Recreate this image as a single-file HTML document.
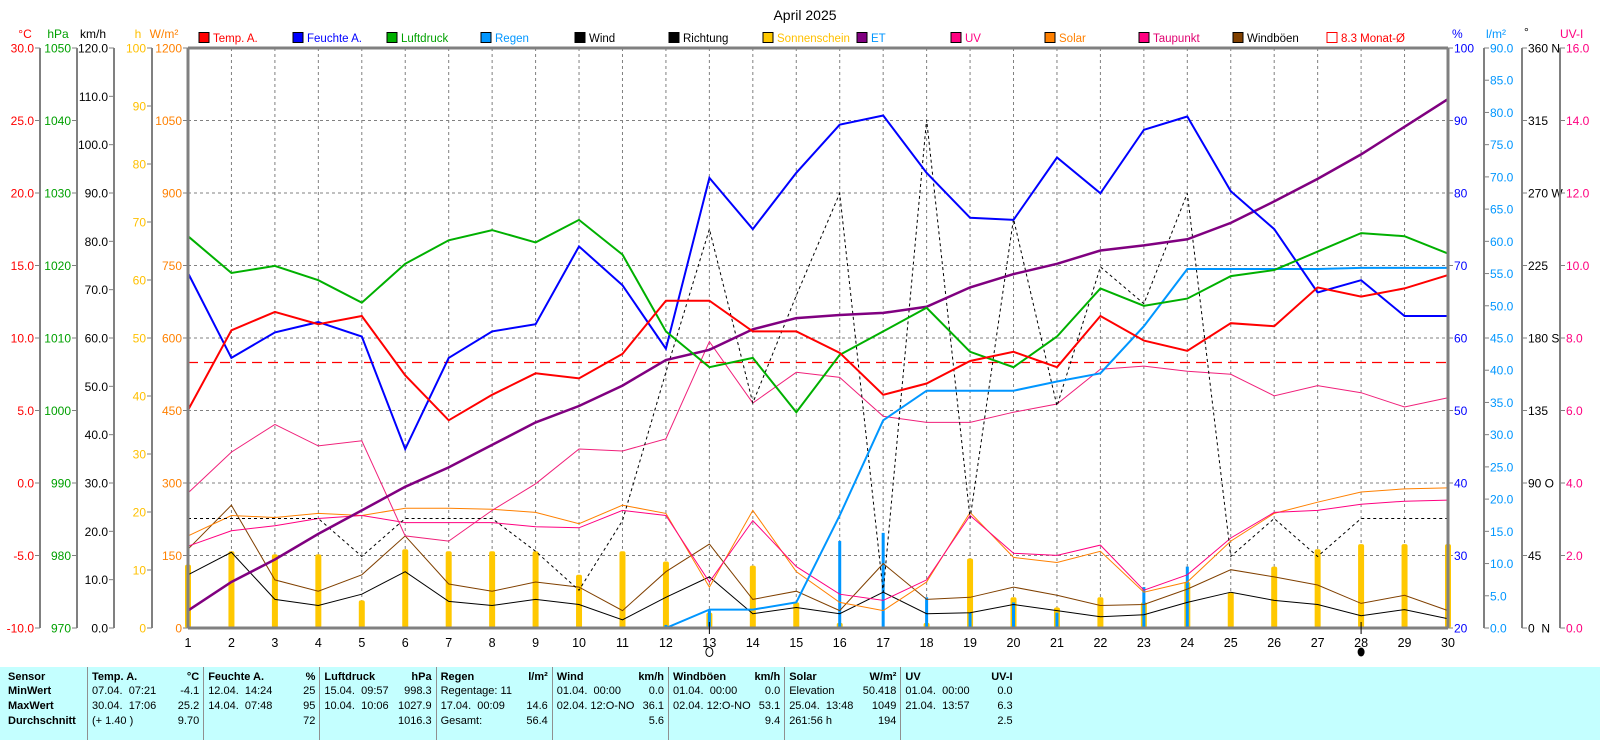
<!DOCTYPE html>
<html><head><meta charset="utf-8">
<style>
html,body{margin:0;padding:0;background:#fff;width:1600px;height:740px;overflow:hidden;font-family:"Liberation Sans",sans-serif}
svg{position:absolute;left:0;top:0}
text{font-family:"Liberation Sans",sans-serif}
#tbl{position:absolute;left:0;top:667px;width:1600px;height:73px;background:#c4ffff;font-size:11px}
#tbl div{position:absolute;white-space:nowrap}
.b{font-weight:bold}
.sep{width:1px;background:#909090;top:0;height:73px}
</style></head><body>
<svg id="s" width="1600" height="667" xmlns="http://www.w3.org/2000/svg"></svg>
<div id="tbl"></div>
<script>
var s=document.getElementById('s'),h='';
function X(d){return 188+(d-1)*43.448;}
function Y(p){return 48+(p-48)*580/567;}
var T=48,B=628;
function line(x1,y1,x2,y2,c,w,da){h+='<line x1="'+x1+'" y1="'+y1+'" x2="'+x2+'" y2="'+y2+'" stroke="'+c+'" stroke-width="'+(w||1)+'"'+(da?' stroke-dasharray="'+da+'"':'')+'/>';}
function txt(x,y,t,c,a,sz){h+='<text x="'+x+'" y="'+y+'" fill="'+c+'" font-size="'+(sz||12)+'"'+(a?' text-anchor="'+a+'"':'')+'>'+t+'</text>';}
for(var i=1;i<8;i++){var y=T+i*72.5;line(188,y,1448,y,'#808080',1,'3,3');}
for(var d=2;d<30;d++)line(X(d),T,X(d),B,'#808080',1,'3,3');
line(188,362.5,1448,362.5,'#ff0000',1.3,'10,6');
txt(805,20,'April 2025','#000','middle',14);
var lg=[['Temp. A.','#ff0000','#ff0000'],['Feuchte A.','#0000ff','#0000ff'],['Luftdruck','#00b000','#00a000'],['Regen','#0096ff','#0096ff'],['Wind','#000','#000'],['Richtung','#000','#000'],['Sonnenschein','#ffc800','#ffc000'],['ET','#800080','#0096ff'],['UV','#ff0080','#ff0080'],['Solar','#ff8000','#ff8000'],['Taupunkt','#ff0080','#e00070'],['Windböen','#804000','#000']];
for(var i=0;i<lg.length;i++){var x=199+i*94;h+='<rect x="'+x+'" y="32.5" width="10" height="10" fill="'+lg[i][1]+'" stroke="#000"/>';txt(x+14,42,lg[i][0],lg[i][2],'',11.5);}
h+='<rect x="1327" y="32.5" width="10" height="10" fill="#fff" stroke="#ff0000"/>';txt(1341,42,'8.3 Monat-Ø','#ff0000','',11.5);
txt(25,38,'°C','#ff0000','middle');txt(58,38,'hPa','#00a000','middle');txt(93,38,'km/h','#000','middle');
txt(138,38,'h','#ffc000','middle');txt(164,38,'W/m²','#ff8000','middle');
txt(1452,38,'%','#0000ff');txt(1486,38,'l/m²','#0096ff');txt(1524,36,'°','#000');txt(1560,38,'UV-I','#ff0080');
var ax=[[40,'#ff0000',8,function(i){return (30-5*i).toFixed(1)}],[77,'#00a000',8,function(i){return 1050-10*i}],[114,'#000',12,function(i){return (120-10*i).toFixed(1)}],[152,'#ffc000',10,function(i){return 100-10*i}],[188,'#ff8000',8,function(i){return 1200-150*i}]];
ax.forEach(function(a){line(a[0],T,a[0],B,'#808080',2);for(var i=0;i<=a[2];i++){var y=T+i*580/a[2];line(a[0]-5,y,a[0],y,'#808080',1);txt(a[0]-6,y+4.5,a[3](i),a[1],'end',12);}});
var rx=[[1448,'#0000ff',8,function(i){return 100-10*i},0],[1484,'#0096ff',18,function(i){return (90-5*i).toFixed(1)},1],[1522,'#000',8,function(i){return [ '360 N','315','270 W','225','180 S','135','90 O','45','0 &#160;N'][i]},1],[1560,'#ff0080',8,function(i){return (16-2*i).toFixed(1)},1]];
rx.forEach(function(a){if(a[4])line(a[0],T,a[0],B,'#808080',2);for(var i=0;i<=a[2];i++){var y=T+i*580/a[2];line(a[0],y,a[0]+5,y,'#808080',1);txt(a[0]+6,y+4.5,a[3](i),a[1],'',12);}});
var sun=[553,540,543,543,588,538,540,540,540,563,540,550,600,554,590,610,615,610,547,585,595,585,590,570,580,555,538,533,533,533];
sun.forEach(function(p,i){if(p<614){var y=Y(p);h+='<rect x="'+(X(i+1)-3)+'" y="'+y+'" width="6" height="'+(B-y)+'" rx="2" fill="#ffc800"/>';}});
var rb={13:598,16:530,17:522,18:585,19:600,20:590,21:600,23:575,24:555,12:612};
for(var k in rb){var y=Y(rb[k]);h+='<rect x="'+(X(+k)-1.5)+'" y="'+y+'" width="3" height="'+(B-y)+'" fill="#0096ff"/>';}
function pl(a,c,w,da){var p=a.map(function(v,i){return X(i+1).toFixed(1)+','+Y(v).toFixed(1)}).join(' ');h+='<polyline points="'+p+'" fill="none" stroke="'+c+'" stroke-width="'+w+'"'+(da?' stroke-dasharray="'+da+'"':'')+'/>';}
pl([538,495,568,579,563,525,572,579,570,575,598,560,533,587,579,598,552,587,585,575,583,593,592,577,558,565,573,591,583,598],'#804000',1);
pl([563,541,587,593,582,560,589,593,587,592,607,585,565,601,595,601,580,601,600,592,598,604,602,590,580,588,592,603,597,606],'#000',1);
pl([525,505,507,503,505,498,498,499,502,513,495,503,575,500,560,590,598,570,502,546,551,540,580,570,530,503,492,482,479,478],'#ff8000',1);
pl([535,520,515,508,505,512,512,512,516,517,500,505,570,510,555,582,588,568,505,542,544,534,578,563,527,502,500,494,491,490],'#ff0080',1);
pl([483,443,416,437,432,525,530,500,474,440,442,430,335,395,365,370,408,414,414,404,396,362,359,364,367,388,378,385,399,390],'#f0207a',1);
pl([508,508,508,508,545,508,508,508,540,578,510,365,225,395,290,190,580,118,508,215,398,262,298,190,545,508,545,508,508,508],'#000',1,'3,3');
pl([615,615,615,615,615,615,615,615,615,615,615,615,597,597,590,505,412,383,383,383,374,366,320,264,264,264,264,263,263,263],'#0096ff',2);
pl([598,570,548,523,500,477,458,436,414,398,378,353,343,323,312,309,307,301,282,269,259,246,241,235,219,198,176,152,125,98],'#800080',2.5);
pl([268,351,326,316,330,440,351,325,318,242,280,342,175,225,170,123,114,170,214,216,155,190,128,115,188,225,287,275,310,310],'#0000ff',2);
pl([232,268,261,275,297,259,236,226,238,216,250,325,360,351,404,348,325,302,345,360,330,283,300,293,271,265,247,229,232,249],'#00b000',2);
pl([402,324,306,318,310,368,412,387,366,371,347,295,295,325,325,346,387,376,354,345,360,310,334,344,317,320,282,291,283,270],'#ff0000',2);
line(188,T,1448,T,'#808080',3);line(188,B,1448,B,'#808080',3);line(1448,T,1448,B,'#808080',3);line(188,T,188,B,'#808080',3);
for(var d=1;d<=30;d++)txt(X(d),647,d,'#000','middle',12.5);
line(X(13),622,X(13),634,'#000',1);line(X(28),622,X(28),634,'#000',1);
h+='<ellipse cx="'+X(13)+'" cy="652" rx="3.5" ry="4.5" fill="#fff" stroke="#000"/>';
h+='<ellipse cx="'+X(28)+'" cy="652" rx="3.5" ry="4.5" fill="#000"/>';
s.innerHTML=h;
var t='',rows=[16,30,45,60];
function cell(x,r,v,b,al){t+='<div class="'+(b?'b':'')+'" style="'+(al?'right:'+(1600-x)+'px':'left:'+x+'px')+';top:'+(rows[r]-12)+'px">'+v+'</div>';}
['Sensor','MinWert','MaxWert','Durchschnitt'].forEach(function(v,r){cell(8,r,v,1)});
var cols=[['Temp. A.','°C',['07.04.&#160; 07:21','30.04.&#160; 17:06','(+ 1.40 )'],['-4.1','25.2','9.70']],
['Feuchte A.','%',['12.04.&#160; 14:24','14.04.&#160; 07:48',''],['25','95','72']],
['Luftdruck','hPa',['15.04.&#160; 09:57','10.04.&#160; 10:06',''],['998.3','1027.9','1016.3']],
['Regen','l/m²',['Regentage: 11','17.04.&#160; 00:09','Gesamt:'],['','14.6','56.4']],
['Wind','km/h',['01.04.&#160; 00:00','02.04. 12:O-NO',''],['0.0','36.1','5.6']],
['Windböen','km/h',['01.04.&#160; 00:00','02.04. 12:O-NO',''],['0.0','53.1','9.4']],
['Solar','W/m²',['Elevation','25.04.&#160; 13:48','261:56 h'],['50.418','1049','194']],
['UV','UV-I',['01.04.&#160; 00:00','21.04.&#160; 13:57',''],['0.0','6.3','2.5']]];
cols.forEach(function(c,i){var x0=87+i*116.2,x1=x0+116.2;t+='<div class="sep" style="left:'+x0+'px"></div>';
cell(x0+5,0,c[0],1);cell(x1-4,0,c[1],1,1);for(var r=0;r<3;r++){cell(x0+5,r+1,c[2][r]);cell(x1-4,r+1,c[3][r],0,1);}});
document.getElementById('tbl').innerHTML=t;
</script>
</body></html>
